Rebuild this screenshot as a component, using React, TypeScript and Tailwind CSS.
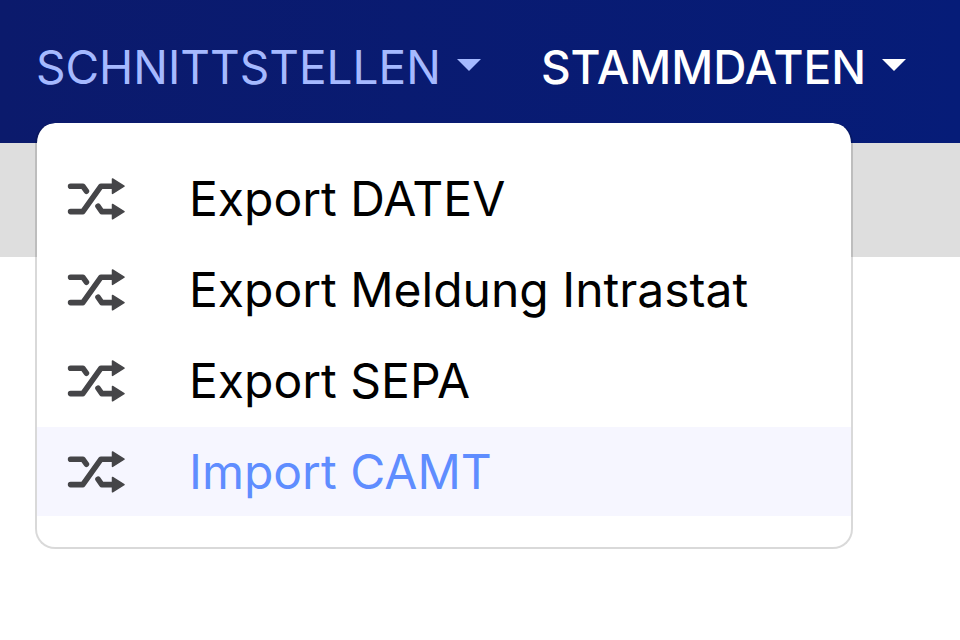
type Entry = {
  label: string;
  active?: boolean;
};

const exportEntries: Entry[] = [
  { label: "Export DATEV" },
  { label: "Export Meldung Intrastat" },
  { label: "Export SEPA" },
  { label: "Import CAMT", active: true },
];

function ShuffleIcon() {
  return (
    <svg viewBox="0 0 58 44" className="h-11 w-[58px] shrink-0 text-[#454548]" fill="none" stroke="currentColor" strokeWidth="5.6" strokeLinecap="round" strokeLinejoin="round" aria-hidden="true">
      <path d="M3.6 9.2h12.2l3.6 5" />
      <path d="M3.6 34.6h12.2L34 9.2h12" />
      <path d="M31 29.2l3.8 5.4h12" />
      <path d="M45.5 2L57 9.2l-11.5 7.2zM45.5 27.4L57 34.6l-11.5 7.2z" fill="currentColor" strokeWidth="1.5" />
    </svg>
  );
}

function Caret() {
  return (
    <svg viewBox="0 0 24 12" className="mb-1 h-3 w-6" fill="currentColor" aria-hidden="true">
      <path d="M0 0h24L12 12z" />
    </svg>
  );
}

export default function App() {
  return (
    <div className="min-h-screen bg-white font-['Inter','Liberation_Sans',sans-serif] text-[46px] leading-none text-black">
      <header className="relative bg-linear-to-r from-[#0b1a6c] to-[#061c78]">
        <nav className="flex h-[143px] items-start gap-15 px-9 pt-11">
          <button type="button" aria-expanded="true" aria-controls="schnittstellen-menu" className="flex items-center gap-4 text-[#a5b9ff]">
            SCHNITTSTELLEN
            <Caret />
          </button>
          <button type="button" aria-expanded="false" className="flex items-center gap-4 font-medium text-white">
            STAMMDATEN
            <Caret />
          </button>
        </nav>

        <ul
          id="schnittstellen-menu"
          className="absolute left-[35px] top-[123px] z-10 flex w-[818px] max-w-[calc(100%-70px)] flex-col gap-0.5 rounded-[20px] border-2 border-t-0 border-black/15 bg-white bg-clip-padding pb-[31px] pt-[31px] text-5xl leading-none"
        >
          {exportEntries.map((entry) => (
            <li key={entry.label}>
              <a
                href="#"
                className={`flex h-[89px] items-center gap-16 pr-8 pl-[30px] whitespace-nowrap ${entry.active ? "bg-[#f6f6ff] text-[#5f8dff]" : ""}`}
              >
                <ShuffleIcon />
                {entry.label}
              </a>
            </li>
          ))}
        </ul>
      </header>
      <div className="h-[114px] bg-[#dedede]" />
    </div>
  );
}
